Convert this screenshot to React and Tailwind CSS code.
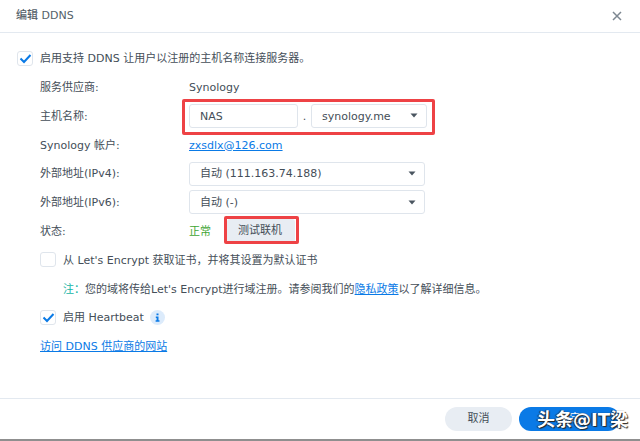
import React from "react";

const font = { fontFamily: '"DejaVu Sans", "Noto Sans CJK SC", sans-serif' };

function Check({ checked, className = "" }) {
  return (
    <span className={`flex h-[15px] w-[16px] shrink-0 items-center justify-center rounded-[3px] border border-[#dfe5ec] bg-white ${className}`}>
      {checked && (
        <svg width="13" height="11" viewBox="0 0 13 11" fill="none">
          <path d="M1.5 5.5 L5 9 L11.5 2" stroke="#0a7ae6" strokeWidth="2" />
        </svg>
      )}
    </span>
  );
}

function Row({ label, children }) {
  return (
    <div className="flex h-[28.8px] items-center pl-10">
      <div className="w-[149px] shrink-0 pt-[2px]">{label}</div>
      {children}
    </div>
  );
}

function Caret() {
  return (
    <svg width="8" height="5" viewBox="0 0 8 5" className="ml-auto">
      <path d="M0.5 0.5 H7.5 L4 4.5 Z" fill="#4a5560" />
    </svg>
  );
}

function Select({ value, className = "" }) {
  return (
    <div className={`flex h-[24px] items-center rounded-[3px] border border-[#dfe5ec] bg-white pl-[10px] pr-[8px] ${className}`}>
      <span className="pt-[2px]">{value}</span>
      <Caret />
    </div>
  );
}

export default function App() {
  return (
    <div className="flex h-[441px] w-[640px] flex-col overflow-hidden bg-white text-[11px] text-[#444e58]" style={font}>
      <div className="flex h-[33px] shrink-0 items-center justify-between border-b border-[#e3e9f0] pl-4 pr-[18px]">
        <span className="pt-[1px] font-medium text-[#555f69]">编辑 DDNS</span>
        <svg width="10" height="10" viewBox="0 0 10 10">
          <path d="M1 1 L9 9 M9 1 L1 9" stroke="#7d8791" strokeWidth="1.5" />
        </svg>
      </div>

      <div className="flex-1 pt-[11px]">
        <div className="flex h-[28.8px] items-center pl-[17px]">
          <Check checked className="mr-[7px]" />
          <span className="pt-[2px]">启用支持 DDNS 让用户以注册的主机名称连接服务器。</span>
        </div>

        <Row label="服务供应商:">
          <span className="pt-[2px]">Synology</span>
        </Row>

        <Row label="主机名称:">
          <div className="relative flex items-center">
            <div className="flex h-[24px] w-[109px] items-center rounded-[3px] border border-[#dfe5ec] pl-[10px]">
              <span className="pt-[2px]">NAS</span>
            </div>
            <span className="w-[13px] pt-[2px] text-center">.</span>
            <Select value="synology.me" className="w-[116px]" />
            <div className="pointer-events-none absolute -bottom-[7px] -left-[7px] -right-[8px] -top-[5px] rounded-[2px] border-[3px] border-[#ee4245]" />
          </div>
        </Row>

        <Row label="Synology 帐户:">
          <a className="pt-[2px] text-[#0a7ae6] underline">zxsdlx@126.com</a>
        </Row>

        <Row label="外部地址(IPv4):">
          <Select value="自动 (111.163.74.188)" className="w-[236px]" />
        </Row>

        <Row label="外部地址(IPv6):">
          <Select value="自动 (-)" className="w-[236px]" />
        </Row>

        <Row label="状态:">
          <span className="w-[38px] pt-[2px] text-[#3fa535]">正常</span>
          <div className="relative">
            <button className="h-[24px] w-[68px] rounded-[3px] bg-[#e8edf3] pr-[2px] pt-[1px] text-[#444e58]">测试联机</button>
            <div className="pointer-events-none absolute -bottom-[1px] -left-[3px] -right-[4px] -top-[3px] rounded-[2px] border-[3px] border-[#ee4245]" />
          </div>
        </Row>

        <div className="flex h-[28.8px] items-center pl-10">
          <Check className="mr-[7px]" />
          <span className="pt-[2px]">从 Let's Encrypt 获取证书，并将其设置为默认证书</span>
        </div>

        <div className="flex h-[28.8px] items-center pl-[63px]">
          <span className="pt-[2px] text-[#16b5a5]">注：</span>
          <span className="pt-[2px]">
            您的域将传给Let's Encrypt进行域注册。请参阅我们的<a className="text-[#0a7ae6] underline">隐私政策</a>以了解详细信息。
          </span>
        </div>

        <div className="flex h-[28.8px] items-center pl-10">
          <Check checked className="mr-[7px]" />
          <span className="pt-[2px]">启用 Heartbeat</span>
          <span className="ml-[6px] flex h-[15px] w-[15px] items-center justify-center rounded-full bg-[#dcebfb]">
            <svg width="5" height="9" viewBox="0 0 5 9">
              <path d="M1.5 0.5 H3.5 V2.2 H1.5 Z M0.8 3.5 H3.5 V7.3 H4.5 V8.7 H0.6 V7.3 H1.6 V4.9 H0.8 Z" fill="#0a7ae6" />
            </svg>
          </span>
        </div>

        <div className="flex h-[28.8px] items-center pl-10">
          <a className="pt-[2px] text-[#0a7ae6] underline">访问 DDNS 供应商的网站</a>
        </div>
      </div>

      <div className="relative flex h-[41px] shrink-0 items-center justify-end gap-[7px] border-t border-[#e3e9f0] pr-5">
        <button className="h-[24px] w-[67px] rounded-full bg-[#e8edf3] pt-[1px] text-[#444e58]">取消</button>
        <button className="h-[24px] w-[101px] rounded-full bg-[#0a7ae6] text-white">确定</button>
        <span
          className="absolute right-[12px] top-[9px] text-[18px] font-semibold leading-[24px] text-white"
          style={{ textShadow: "1px 1px 1px #222, -1px 0 1px #222" }}
        >
          头条@IT梁
        </span>
      </div>
      <div className="h-[2px] shrink-0 bg-[#8f8f8f]" />
    </div>
  );
}
